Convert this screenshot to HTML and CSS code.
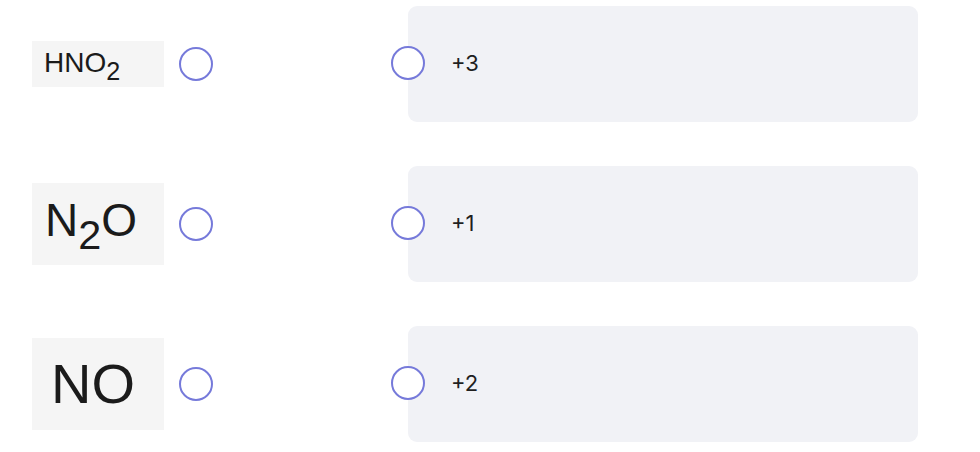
FILE: index.html
```html
<!DOCTYPE html>
<html>
<head>
<meta charset="utf-8">
<link rel="stylesheet" href="styles.css">
</head>
<body>
<div class="match">
  <div class="row">
    <div class="left">
      <div class="formula f-hno2"><span>HNO<sub>2</sub></span></div>
      <span class="radio"></span>
    </div>
    <div class="card"><span class="radio radio-edge"></span><span class="val">+3</span></div>
  </div>
  <div class="row">
    <div class="left">
      <div class="formula f-n2o"><span>N<sub>2</sub>O</span></div>
      <span class="radio"></span>
    </div>
    <div class="card"><span class="radio radio-edge"></span><span class="val">+1</span></div>
  </div>
  <div class="row">
    <div class="left">
      <div class="formula f-no"><span>NO</span></div>
      <span class="radio"></span>
    </div>
    <div class="card"><span class="radio radio-edge"></span><span class="val">+2</span></div>
  </div>
</div>
</body>
</html>
```
FILE: styles.css
```css
html, body {
  margin: 0;
  padding: 0;
  background: #ffffff;
}
.match {
  display: flex;
  flex-direction: column;
  gap: 44px;
  padding-top: 6px;
}
.row {
  display: flex;
  align-items: center;
  height: 116px;
}
.left {
  display: flex;
  align-items: center;
  gap: 15px;
  width: 376px;
  padding-left: 32px;
  box-sizing: border-box;
}
.formula {
  width: 132px;
  box-sizing: border-box;
  background: #f5f5f5;
  color: #1b1b1b;
  font-family: "Liberation Sans", Arial, sans-serif;
  display: flex;
  align-items: center;
  line-height: 1;
}
.formula sub {
  font-size: 0.9em;
  vertical-align: -0.32em;
  line-height: 0;
}
.f-hno2 {
  height: 46px;
  font-size: 28px;
  padding-left: 12px;
  padding-bottom: 2px;
}
.f-n2o {
  height: 82px;
  font-size: 46px;
  padding-left: 13px;
  padding-bottom: 8px;
}
.f-no {
  height: 92px;
  font-size: 56px;
  padding-left: 19px;
}
.radio {
  display: block;
  width: 34px;
  height: 34px;
  box-sizing: border-box;
  border: 2px solid #767ada;
  border-radius: 50%;
  background: #ffffff;
  flex: none;
}
.card {
  position: relative;
  margin-left: 32px;
  width: 510px;
  height: 116px;
  background: #f1f2f6;
  border-radius: 9px;
  display: flex;
  align-items: center;
  padding-left: 43px;
  box-sizing: border-box;
}
.radio-edge {
  position: absolute;
  left: -17px;
  top: 40px;
}
.val {
  font-family: Inter, "Noto Sans", sans-serif;
  font-size: 22px;
  color: #1f1f1f;
  padding-bottom: 3px;
}
```
